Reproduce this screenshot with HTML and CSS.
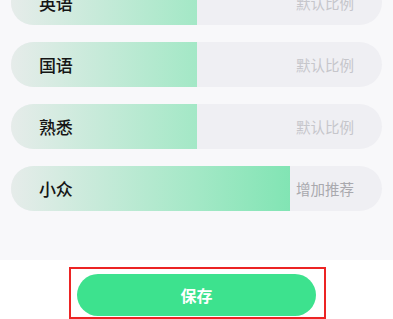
FILE: index.html
```html
<!DOCTYPE html>
<html lang="zh">
<head>
<meta charset="utf-8">
<link rel="stylesheet" href="styles.css">
</head>
<body>
<section class="panel">
  <div class="list">
    <div class="row">
      <div class="fill" style="width:50%"></div>
      <div class="content"><span class="label">英语</span><span class="hint">默认比例</span></div>
    </div>
    <div class="row">
      <div class="fill" style="width:50%"></div>
      <div class="content"><span class="label">国语</span><span class="hint">默认比例</span></div>
    </div>
    <div class="row">
      <div class="fill" style="width:50%"></div>
      <div class="content"><span class="label">熟悉</span><span class="hint">默认比例</span></div>
    </div>
    <div class="row">
      <div class="fill" style="width:75.2%"></div>
      <div class="content"><span class="label">小众</span><span class="hint hint-up">增加推荐</span></div>
    </div>
  </div>
</section>
<footer class="footer">
  <div class="mark">
    <button class="save">保存</button>
  </div>
</footer>
</body>
</html>
```
FILE: styles.css
```css
html, body {
  margin: 0;
  padding: 0;
  background: #ffffff;
  font-family: "Noto Sans CJK SC", "Noto Sans", sans-serif;
  overflow: hidden;
}
.panel {
  display: flex;
  flex-direction: column;
  background: #f8f8fa;
  height: 260px;
  padding: 0 11px;
  box-sizing: border-box;
}
.list {
  display: flex;
  flex-direction: column;
  gap: 17px;
  margin-top: -20px;
}
.row {
  display: grid;
  height: 45px;
  border-radius: 23px;
  overflow: hidden;
  background: #efeff3;
}
.fill, .content {
  grid-area: 1 / 1;
}
.fill {
  height: 100%;
  background: linear-gradient(to right, #e6ecea 0px, #a3e8c6 186px, #60e1a2 371px);
  background-size: 371px 100%;
  background-repeat: no-repeat;
}
.content {
  display: flex;
  align-items: center;
  justify-content: space-between;
  padding: 0 28px 0 28px;
}
.label {
  font-size: 17px;
  font-weight: 500;
  color: #151515;
  letter-spacing: -0.3px;
}
.hint {
  font-size: 14.5px;
  color: #c6c6cb;
  letter-spacing: 0;
}
.hint-up {
  color: #a9a9ae;
}
.footer {
  display: flex;
  justify-content: center;
  padding-top: 7px;
}
.mark {
  width: 257px;
  height: 52px;
  box-sizing: border-box;
  border: 2px solid #ec2424;
  padding: 5px 8px 0 6px;
  margin-left: 2px;
}
.save {
  display: block;
  width: 100%;
  height: 42px;
  border: none;
  border-radius: 21px;
  background: #3de28e;
  color: #ffffff;
  font-family: "Noto Sans CJK SC", sans-serif;
  font-size: 16px;
  font-weight: 700;
  padding: 0;
}
```
